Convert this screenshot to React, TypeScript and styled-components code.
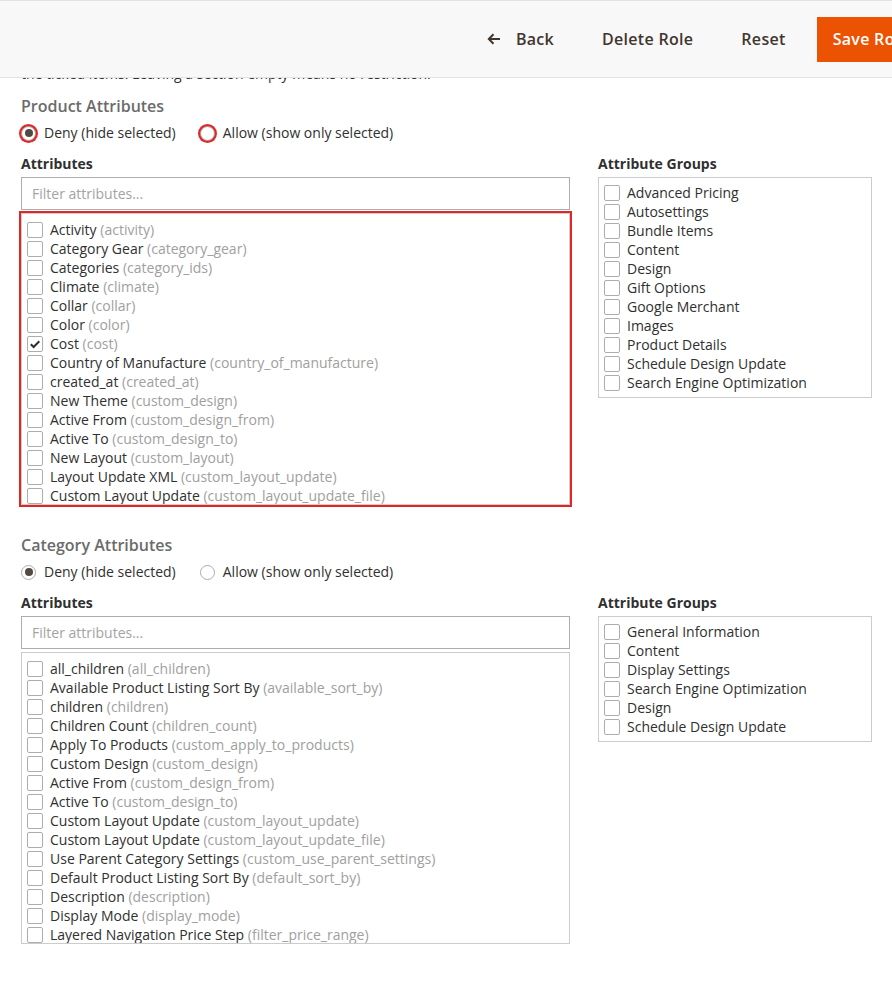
import React, { FC } from "react";
import styled, { createGlobalStyle, css } from "styled-components";

interface AttributeItem {
  label: string;
  code: string;
  checked?: boolean;
}

const productAttributes: AttributeItem[] = [
  { label: "Activity", code: "activity" },
  { label: "Category Gear", code: "category_gear" },
  { label: "Categories", code: "category_ids" },
  { label: "Climate", code: "climate" },
  { label: "Collar", code: "collar" },
  { label: "Color", code: "color" },
  { label: "Cost", code: "cost", checked: true },
  { label: "Country of Manufacture", code: "country_of_manufacture" },
  { label: "created_at", code: "created_at" },
  { label: "New Theme", code: "custom_design" },
  { label: "Active From", code: "custom_design_from" },
  { label: "Active To", code: "custom_design_to" },
  { label: "New Layout", code: "custom_layout" },
  { label: "Layout Update XML", code: "custom_layout_update" },
  { label: "Custom Layout Update", code: "custom_layout_update_file" },
];

const productGroups = [
  "Advanced Pricing",
  "Autosettings",
  "Bundle Items",
  "Content",
  "Design",
  "Gift Options",
  "Google Merchant",
  "Images",
  "Product Details",
  "Schedule Design Update",
  "Search Engine Optimization",
];

const categoryAttributes: AttributeItem[] = [
  { label: "all_children", code: "all_children" },
  { label: "Available Product Listing Sort By", code: "available_sort_by" },
  { label: "children", code: "children" },
  { label: "Children Count", code: "children_count" },
  { label: "Apply To Products", code: "custom_apply_to_products" },
  { label: "Custom Design", code: "custom_design" },
  { label: "Active From", code: "custom_design_from" },
  { label: "Active To", code: "custom_design_to" },
  { label: "Custom Layout Update", code: "custom_layout_update" },
  { label: "Custom Layout Update", code: "custom_layout_update_file" },
  { label: "Use Parent Category Settings", code: "custom_use_parent_settings" },
  { label: "Default Product Listing Sort By", code: "default_sort_by" },
  { label: "Description", code: "description" },
  { label: "Display Mode", code: "display_mode" },
  { label: "Layered Navigation Price Step", code: "filter_price_range" },
];

const categoryGroups = [
  "General Information",
  "Content",
  "Display Settings",
  "Search Engine Optimization",
  "Design",
  "Schedule Design Update",
];

const Checkbox: FC<{ checked?: boolean }> = ({ checked }) => (
  <CheckBox>
    {checked && (
      <svg width="12" height="12" viewBox="0 0 12 12">
        <path
          d="M1.8 6.2 L4.6 9 L10.3 3.2"
          fill="none"
          stroke="#303030"
          strokeWidth="2"
        />
      </svg>
    )}
  </CheckBox>
);

interface SectionProps {
  title: string;
  attributes: AttributeItem[];
  groups: string[];
  invalid?: boolean;
}

const RestrictionSection: FC<SectionProps> = ({
  title,
  attributes,
  groups,
  invalid,
}) => (
  <Section>
    <SectionTitle>{title}</SectionTitle>
    <RadioRow>
      <RadioOption>
        <Radio $checked $invalid={invalid} />
        Deny (hide selected)
      </RadioOption>
      <RadioOption>
        <Radio $invalid={invalid} />
        Allow (show only selected)
      </RadioOption>
    </RadioRow>
    <Columns>
      <div>
        <FieldLabel>Attributes</FieldLabel>
        <FilterInput placeholder="Filter attributes..." />
        <AttributeList $invalid={invalid}>
          {attributes.map((item, i) => (
            <OptionRow key={i}>
              <Checkbox checked={item.checked} />
              <span>
                {item.label} <Code>({item.code})</Code>
              </span>
            </OptionRow>
          ))}
        </AttributeList>
      </div>
      <div>
        <FieldLabel>Attribute Groups</FieldLabel>
        <GroupList>
          {groups.map((group) => (
            <OptionRow key={group}>
              <Checkbox />
              <span>{group}</span>
            </OptionRow>
          ))}
        </GroupList>
      </div>
    </Columns>
  </Section>
);

const App: FC = () => (
  <>
    <GlobalStyle />
    <Header>
      <GhostButton>
        <svg width="14" height="14" viewBox="0 0 14 14">
          <path
            d="M13 7 H2 M6.5 2.2 L1.8 7 L6.5 11.8"
            fill="none"
            stroke="#41362f"
            strokeWidth="2"
          />
        </svg>
        Back
      </GhostButton>
      <GhostButton>Delete Role</GhostButton>
      <GhostButton>Reset</GhostButton>
      <PrimaryButton>Save Role</PrimaryButton>
    </Header>
    <Content>
      <Intro>
        the ticked items. Leaving a section empty means no restriction.
      </Intro>
      <RestrictionSection
        title="Product Attributes"
        attributes={productAttributes}
        groups={productGroups}
        invalid
      />
      <RestrictionSection
        title="Category Attributes"
        attributes={categoryAttributes}
        groups={categoryGroups}
      />
    </Content>
  </>
);

const GlobalStyle = createGlobalStyle`
  body {
    margin: 0;
    background: #fff;
    font-family: "Open Sans", "Liberation Sans", sans-serif;
    font-size: 14px;
    color: #303030;
  }
`;

const Header = styled.div`
  position: sticky;
  top: 0;
  z-index: 2;
  display: flex;
  align-items: center;
  justify-content: flex-end;
  height: 76px;
  background: #f8f8f8;
  border-top: 1px solid #e3e3e3;
  border-bottom: 1px solid #e3e3e3;
  overflow: hidden;
`;

const GhostButton = styled.button`
  display: flex;
  align-items: center;
  gap: 15px;
  flex-shrink: 0;
  height: 45px;
  padding: 0 24px;
  border: none;
  background: transparent;
  font-family: inherit;
  font-size: 16px;
  font-weight: 600;
  letter-spacing: 0.3px;
  color: #41362f;
`;

const PrimaryButton = styled(GhostButton)`
  margin-left: 7px;
  margin-right: -33px;
  padding: 0 16px;
  background: #eb5202;
  color: #fff;
`;

const Content = styled.div`
  position: relative;
  z-index: 1;
  padding: 0 21px 40px;
`;

const Intro = styled.p`
  position: relative;
  z-index: -1;
  margin: -14px 0 0;
  line-height: 19px;
`;

const Section = styled.div`
  margin-top: 12px;

  & + & {
    margin-top: 29px;
  }
`;

const SectionTitle = styled.div`
  font-size: 16px;
  font-weight: 600;
  line-height: 22px;
  color: #6b6b6b;
`;

const RadioRow = styled.div`
  display: flex;
  gap: 24px;
  margin-top: 6px;
`;

const RadioOption = styled.label`
  display: flex;
  align-items: center;
  gap: 8px;
  line-height: 20px;
`;

const Radio = styled.span<{ $checked?: boolean; $invalid?: boolean }>`
  position: relative;
  box-sizing: border-box;
  width: 15px;
  height: 15px;
  border: 1px solid #adadad;
  border-radius: 50%;
  background: #fff;

  ${({ $invalid }) =>
    $invalid &&
    css`
      border-color: #9c9c9c;
      box-shadow: 0 0 0 2px #e22626;
    `}

  ${({ $checked }) =>
    $checked &&
    css`
      &::after {
        content: "";
        position: absolute;
        top: 2.5px;
        left: 2.5px;
        width: 8px;
        height: 8px;
        border-radius: 50%;
        background: #514943;
      }
    `}
`;

const Columns = styled.div`
  display: grid;
  grid-template-columns: 549px 274px;
  column-gap: 28px;
  align-items: start;
  margin-top: 11px;
`;

const FieldLabel = styled.div`
  font-weight: 700;
  line-height: 19px;
  margin-bottom: 4px;
`;

const FilterInput = styled.input`
  box-sizing: border-box;
  display: block;
  width: 100%;
  height: 33px;
  padding: 0 10px;
  border: 1px solid #adadad;
  font-family: inherit;
  font-size: 14px;
  color: #303030;

  &::placeholder {
    color: #a3a3a3;
  }
`;

const AttributeList = styled.div<{ $invalid?: boolean }>`
  box-sizing: border-box;
  height: 292px;
  margin-top: 3px;
  padding: 6px 5px 0;
  border: 1px solid #cccccc;
  overflow: hidden;

  ${({ $invalid }) =>
    $invalid &&
    css`
      outline: 2px solid #e22626;
    `}
`;

const GroupList = styled.div`
  box-sizing: border-box;
  padding: 5px 5px 5px;
  border: 1px solid #cccccc;
`;

const OptionRow = styled.div`
  display: flex;
  align-items: center;
  gap: 7px;
  height: 19px;
  white-space: nowrap;
`;

const CheckBox = styled.span`
  box-sizing: border-box;
  display: flex;
  align-items: center;
  justify-content: center;
  flex-shrink: 0;
  width: 16px;
  height: 16px;
  border: 1px solid #adadad;
  border-radius: 2px;
  background: #fff;
`;

const Code = styled.span`
  color: #a0a0a0;
`;

export default App;
